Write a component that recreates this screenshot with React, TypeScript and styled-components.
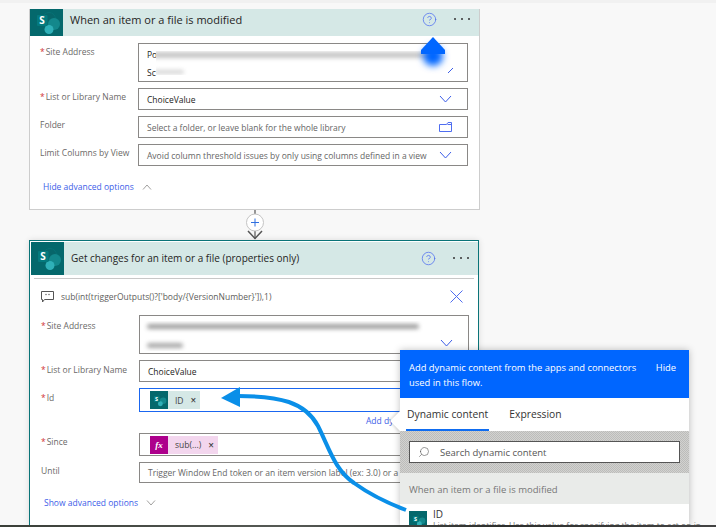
import React from "react";
import styled, { createGlobalStyle } from "styled-components";
import { Search, CircleHelp } from "lucide-react";

const Global = createGlobalStyle`
  html, body { margin: 0; padding: 0; background: #f8f8f8; }
  body { font-family: "Open Sans", "Noto Sans", sans-serif; color: #323130; }
`;

const Page = styled.div`
  position: relative;
  width: 716px;
  height: 527px;
  overflow: hidden;
  display: flex;
  flex-direction: column;
`;
const Canvas = styled.div`
  position: relative;
  height: 525px;
  overflow: hidden;
  background: #f8f8f8;
  border-top: 3px solid #f1f1f1;
  box-sizing: border-box;
  padding: 6px 0 0 29px;
`;
const BottomStrip = styled.div`
  height: 2px;
  background: linear-gradient(90deg, #3a3f38, #565a55 40%, #2d2f2d 70%, #444 100%);
`;
const TriggerCard = styled.section`
  width: 451px;
  height: 201px;
  box-sizing: border-box;
  background: #fff;
  border: 1px solid #cdcdcd;
  border-top: 0;
`;
const ActionCard = styled.section`
  width: 450px;
  height: 286px;
  box-sizing: border-box;
  background: #fff;
  border: 1px solid #0a7478;
  border-bottom: 0;
  padding: 1px 0 0 1px;
  box-shadow: 0 0 6px rgba(0, 0, 0, 0.12);
`;
const Header = styled.header<{ $h: number }>`
  height: ${(p) => p.$h}px;
  display: flex;
  background: #d5e8e6;
  color: #252423;
`;
const HeaderBody = styled.div<{ $lift: number }>`
  flex: 1;
  display: flex;
  align-items: center;
  box-sizing: border-box;
  padding: 0 9px ${(p) => p.$lift}px 7px;
`;
const Title = styled.div<{ $size: number }>`
  flex: 1;
  font-size: ${(p) => p.$size}px;
  white-space: nowrap;
`;
const Help = styled(CircleHelp)`
  width: 15px;
  height: 15px;
  color: #4f6df0;
  margin-right: 17px;
`;
const Dots = styled.div`
  display: flex;
  gap: 5px;
  & > i {
    width: 2px;
    height: 2px;
    border-radius: 50%;
    background: #333;
  }
`;
const LogoBox = styled.svg`
  display: block;
  flex: none;
  background: #04686c;
`;
const LogoLetter = styled.text`
  font-family: "Open Sans", sans-serif;
  font-weight: 700;
  fill: #fff;
`;
const Logo = ({ w, h }: { w: number; h: number }) => (
  <LogoBox width={w} height={h} viewBox="0 0 33 27">
    <circle cx="19" cy="10" r="6.5" fill="#07666a" stroke="#0b7a7e" strokeWidth=".5" />
    <circle cx="24" cy="15" r="6" fill="#13888c" />
    <circle cx="19" cy="20.5" r="4.5" fill="#2fb0b8" />
    <rect x="7" y="6" width="10.500" height="11" rx="1" fill="#047a7e" />
    <LogoLetter x="9.200" y="15.200" fontSize="10">S</LogoLetter>
  </LogoBox>
);
const Fields = styled.div<{ $top: number }>`
  padding: ${(p) => p.$top}px 0 0 10px;
`;
const Row = styled.div<{ $after: number }>`
  display: grid;
  grid-template-columns: 98px 330px;
  margin-bottom: ${(p) => p.$after}px;
`;
const Label = styled.div<{ $pt?: number }>`
  font-size: 8.5px;
  line-height: 12px;
  padding-top: ${(p) => p.$pt ?? 3}px;
  color: #6b6967;
  white-space: nowrap;
`;
const Star = styled.span`
  color: #d13438;
  margin-right: 1px;
`;
const Box = styled.div<{ $h: number; $focus?: boolean }>`
  position: relative;
  box-sizing: border-box;
  height: ${(p) => p.$h}px;
  border: 1px solid ${(p) => (p.$focus ? "#1a66f0" : "#8a8886")};
  background: #fff;
  display: flex;
  align-items: center;
  justify-content: space-between;
  padding: 0 15px 0 8px;
  font-size: 8.5px;
  color: #252423;
  overflow: hidden;
`;
const Hint = styled.span`
  color: #666;
  white-space: nowrap;
`;
const TwoLines = styled.div`
  align-self: flex-start;
  font-size: 8.5px;
  line-height: 18px;
  padding-top: 2px;
`;
const Mask = styled.div<{ $l: number; $t: number; $w: number; $h: number }>`
  position: absolute;
  left: ${(p) => p.$l}px;
  top: ${(p) => p.$t}px;
  width: ${(p) => p.$w}px;
  height: ${(p) => p.$h}px;
  background: #fff;
  overflow: hidden;
`;
const Smear = styled.div<{ $l: number; $t: number; $w: number; $h: number; $tone: string }>`
  position: absolute;
  left: ${(p) => p.$l}px;
  top: ${(p) => p.$t}px;
  width: ${(p) => p.$w}px;
  height: ${(p) => p.$h}px;
  background: ${(p) => p.$tone};
  filter: blur(2px);
  border-radius: 3px;
`;
const LowChevron = styled.div`
  align-self: flex-end;
  margin-bottom: 6px;
  margin-left: auto;
  z-index: 1;
`;
const Toggle = styled.div<{ $top: number }>`
  display: flex;
  align-items: center;
  gap: 8px;
  padding: ${(p) => p.$top}px 0 0 13px;
  font-size: 8.5px;
  line-height: 12px;
  color: #3d5ee8;
`;
const Connector = styled.div`
  width: 451px;
  height: 30px;
  display: flex;
  justify-content: center;
`;
const CommentRow = styled.div`
  display: flex;
  align-items: center;
  gap: 7px;
  margin: 11px 15px 0 10px;
  font-size: 8.5px;
  color: #605e5c;
`;
const Expr = styled.div`
  flex: 1;
`;
const Divider = styled.div`
  height: 1px;
  margin: 3px 4px 0 3px;
  background: #c8c8c8;
`;
const Chip = styled.div<{ $bg: string }>`
  display: flex;
  align-items: center;
  gap: 7px;
  height: 18px;
  padding-right: 4px;
  background: ${(p) => p.$bg};
  font-size: 8.5px;
  color: #444;
  margin-right: auto;
  margin-left: 2px;
`;
const Fx = styled.div`
  width: 18px;
  height: 18px;
  background: #ad008c;
  color: #fff;
  font: italic 700 9px "Liberation Serif", serif;
  display: flex;
  align-items: center;
  justify-content: center;
`;
const AddDynamic = styled.div`
  padding-left: 325px;
  font-size: 8.5px;
  line-height: 12px;
  color: #3d5ee8;
  white-space: nowrap;
  margin-bottom: 6px;
`;
const Panel = styled.aside`
  position: absolute;
  left: 400px;
  top: 347px;
  width: 289px;
  height: 176px;
  background: #fff;
  box-shadow: 0 0 7px rgba(0, 0, 0, 0.25);
`;
const Caret = styled.div`
  position: absolute;
  left: -7px;
  top: 64px;
  width: 14px;
  height: 14px;
  background: #fff;
  transform: rotate(45deg);
  box-shadow: -1px 1px 3px rgba(0, 0, 0, 0.15);
`;
const PanelHead = styled.div`
  position: relative;
  height: 48px;
  box-sizing: border-box;
  background: #0066ff;
  color: #fff;
  padding: 11px 13px 0 9px;
  display: flex;
  justify-content: space-between;
  font-size: 9.4px;
  line-height: 14.5px;
`;
const PanelIntro = styled.div`
  width: 235px;
`;
const Tabs = styled.div`
  position: relative;
  height: 33px;
  display: flex;
  gap: 19px;
  padding-left: 6px;
  background: #fff;
  font-size: 10.3px;
  color: #333;
`;
const Tab = styled.div<{ $on?: boolean }>`
  height: 33px;
  padding: 0 1px;
  box-sizing: border-box;
  line-height: 32px;
  border-bottom: 2px solid ${(p) => (p.$on ? "#0f6cf0" : "transparent")};
  white-space: nowrap;
`;
const SearchBand = styled.div`
  height: 42px;
  box-sizing: border-box;
  background: repeating-conic-gradient(#bcbcba 0 25%, #d2d2d0 0 50%) 0 0 / 2px 2px;
  padding: 10px 9px;
`;
const SearchBox = styled.div`
  height: 22px;
  box-sizing: border-box;
  border: 1px solid #555;
  background: #fff;
  display: flex;
  align-items: center;
  gap: 10px;
  padding-left: 8px;
  font-size: 9.5px;
  color: #555;
`;
const Flip = styled(Search)`
  width: 12px;
  height: 12px;
  color: #555;
  transform: scaleX(-1);
`;
const Section = styled.div`
  height: 31px;
  box-sizing: border-box;
  background: #e9ebe9;
  padding-left: 9px;
  font-size: 9.5px;
  line-height: 33px;
  color: #777;
`;
const Item = styled.div`
  display: flex;
  gap: 6px;
  padding: 7px 0 0 9px;
`;
const ItemText = styled.div`
  margin-top: -3px;
  font-size: 10px;
  line-height: 12px;
  color: #333;
  white-space: nowrap;
`;
const ItemDesc = styled.div`
  font-size: 8.5px;
  color: #777;
`;
const Overlay = styled.svg`
  position: absolute;
  left: 0;
  top: 0;
  pointer-events: none;
`;
const IconSvg = styled.svg`
  display: block;
  flex: none;
`;

const Chevron = () => (
  <IconSvg width="13" height="8" viewBox="0 0 13 8">
    <polyline points="1,1 6.500,7 12,1" fill="none" stroke="#3d5ee8" strokeWidth="1" />
  </IconSvg>
);
const Up = () => (
  <IconSvg width="10" height="6" viewBox="0 0 10 6">
    <polyline points="1,5.5 5,1 9,5.5" fill="none" stroke="#8a8886" strokeWidth=".8" />
  </IconSvg>
);
const Down = () => (
  <IconSvg width="10" height="6" viewBox="0 0 10 6">
    <polyline points="1,.5 5,5 9,.5" fill="none" stroke="#8a8886" strokeWidth=".8" />
  </IconSvg>
);
const Folder = () => (
  <IconSvg width="13" height="10" viewBox="0 0 13 10">
    <path d="M.5 2.5h7l1.5-2h3.5v9h-12z M8.5 2.5h4" fill="none" stroke="#4f6df0" strokeWidth="1" />
  </IconSvg>
);
const Comment = () => (
  <IconSvg width="13" height="12" viewBox="0 0 13 12">
    <path d="M.5.5h12v8h-9l-2 2.5v-2.500h-1z" fill="none" stroke="#555" strokeWidth="1" />
    <circle cx="5" cy="3.500" r=".7" fill="#555" />
    <circle cx="8" cy="3.500" r=".7" fill="#555" />
  </IconSvg>
);
const Close = () => (
  <IconSvg width="13" height="13" viewBox="0 0 13 13">
    <path d="M.5.5l12 12M12.500.5l-12 12" stroke="#4f6df0" strokeWidth="1" />
  </IconSvg>
);
const Plus = () => (
  <IconSvg width="20" height="30" viewBox="0 0 20 30">
    <path d="M10 0v4M10 21v8" stroke="#555" strokeWidth="1.200" />
    <circle cx="10" cy="12.500" r="8.500" fill="#fff" stroke="#c4c4c4" />
    <path d="M10 8.500v8M6 12.500h8" stroke="#2f6fe0" strokeWidth="1" />
    <polyline points="3,21 10,28.500 17,21" fill="none" stroke="#555" strokeWidth="1.500" />
  </IconSvg>
);
const X = styled.span`
  font-size: 10px;
  font-weight: 600;
`;

const Req = ({ children, pt }: { children: React.ReactNode; pt?: number }) => (
  <Label $pt={pt}>
    <Star>*</Star>
    {children}
  </Label>
);

const EXPR = "sub(int(triggerOutputs()?['body/{VersionNumber}']),1)";

export default function App() {
  return (
    <Page>
      <Global />
      <Canvas>
        <TriggerCard>
          <Header $h={27}>
            <Logo w={33} h={27} />
            <HeaderBody $lift={7}>
              <Title $size={11}>When an item or a file is modified</Title>
              <Help strokeWidth={1.2} />
              <Dots><i /><i /><i /></Dots>
            </HeaderBody>
          </Header>
          <Fields $top={7}>
            <Row $after={6}>
              <Req>Site Address</Req>
              <Box $h={39}>
                <TwoLines>Po<br />Sc</TwoLines>
                <Mask $l={17} $t={7} $w={291} $h={24}>
                  <Smear $l={-4} $t={1} $w={282} $h={6} $tone="#c6c6c6" />
                  <Smear $l={-2} $t={19} $w={30} $h={4} $tone="#d4d4d4" />
                </Mask>
              </Box>
            </Row>
            <Row $after={6}>
              <Req>List or Library Name</Req>
              <Box $h={22}>ChoiceValue<Chevron /></Box>
            </Row>
            <Row $after={6}>
              <Label>Folder</Label>
              <Box $h={22}><Hint>Select a folder, or leave blank for the whole library</Hint><Folder /></Box>
            </Row>
            <Row $after={0}>
              <Label>Limit Columns by View</Label>
              <Box $h={22}><Hint>Avoid column threshold issues by only using columns defined in a view</Hint><Chevron /></Box>
            </Row>
          </Fields>
          <Toggle $top={15}>Hide advanced options <Up /></Toggle>
        </TriggerCard>
        <Connector><Plus /></Connector>
        <ActionCard>
          <Header $h={33}>
            <Logo w={33} h={33} />
            <HeaderBody $lift={1}>
              <Title $size={10}>Get changes for an item or a file (properties only)</Title>
              <Help strokeWidth={1.2} />
              <Dots><i /><i /><i /></Dots>
            </HeaderBody>
          </Header>
          <Divider />
          <CommentRow>
            <Comment />
            <Expr>{EXPR}</Expr>
            <Close />
          </CommentRow>
          <Fields $top={12}>
            <Row $after={6}>
              <Req pt={5}>Site Address</Req>
              <Box $h={39}>
                <Mask $l={3} $t={5} $w={284} $h={30}>
                  <Smear $l={4} $t={3} $w={272} $h={5} $tone="#9e9e9e" />
                  <Smear $l={4} $t={22} $w={36} $h={5} $tone="#a8a8a8" />
                </Mask>
                <LowChevron><Chevron /></LowChevron>
              </Box>
            </Row>
            <Row $after={6}>
              <Req pt={4}>List or Library Name</Req>
              <Box $h={22}>ChoiceValue</Box>
            </Row>
            <Row $after={3}>
              <Req pt={4}>Id</Req>
              <Box $h={24} $focus>
                <Chip $bg="#d5e8e6"><Logo w={18} h={18} />ID <X>×</X></Chip>
              </Box>
            </Row>
            <AddDynamic>Add dynamic content</AddDynamic>
            <Row $after={6}>
              <Req>Since</Req>
              <Box $h={23}>
                <Chip $bg="#f3d6ee"><Fx>fx</Fx>sub(...) <X>×</X></Chip>
              </Box>
            </Row>
            <Row $after={0}>
              <Label>Until</Label>
              <Box $h={21}><Hint>Trigger Window End token or an item version label (ex: 3.0) or a date-time</Hint></Box>
            </Row>
          </Fields>
          <Toggle $top={14}>Show advanced options <Down /></Toggle>
        </ActionCard>
        <Panel>
          <Caret />
          <PanelHead>
            <PanelIntro>Add dynamic content from the apps and connectors used in this flow.</PanelIntro>
            <span>Hide</span>
          </PanelHead>
          <Tabs>
            <Tab $on>Dynamic content</Tab>
            <Tab>Expression</Tab>
          </Tabs>
          <SearchBand>
            <SearchBox><Flip strokeWidth={1.2} />Search dynamic content</SearchBox>
          </SearchBand>
          <Section>When an item or a file is modified</Section>
          <Item>
            <Logo w={18} h={18} />
            <ItemText>
              ID
              <ItemDesc>List item identifier. Use this value for specifying the item to act on in</ItemDesc>
            </ItemText>
          </Item>
        </Panel>
        <Overlay width="716" height="525" viewBox="0 0 716 525">
          <defs>
            <filter id="soft" x="-60%" y="-60%" width="220%" height="220%">
              <feGaussianBlur stdDeviation="3.500" />
            </filter>
          </defs>
          <g transform="translate(0,-3)">
            <circle cx="433" cy="56" r="10" fill="#0066ff" filter="url(#soft)" />
            <path d="M433 37 L445 50 L445 54 L421 54 L421 50 Z" fill="#0066ff" />
            <path d="M448 73 L453 68" stroke="#3d5ee8" strokeWidth="1" />
            <path d="M238 396 C 280 396, 305 402, 318 426 C 330 450, 335 470, 354 483 C 372 496, 390 504, 406 510" fill="none" stroke="#0a8fe8" strokeWidth="4" />
            <path d="M221 398 L240 387 L240 407 Z" fill="#0a8fe8" />
          </g>
        </Overlay>
      </Canvas>
      <BottomStrip />
    </Page>
  );
}
